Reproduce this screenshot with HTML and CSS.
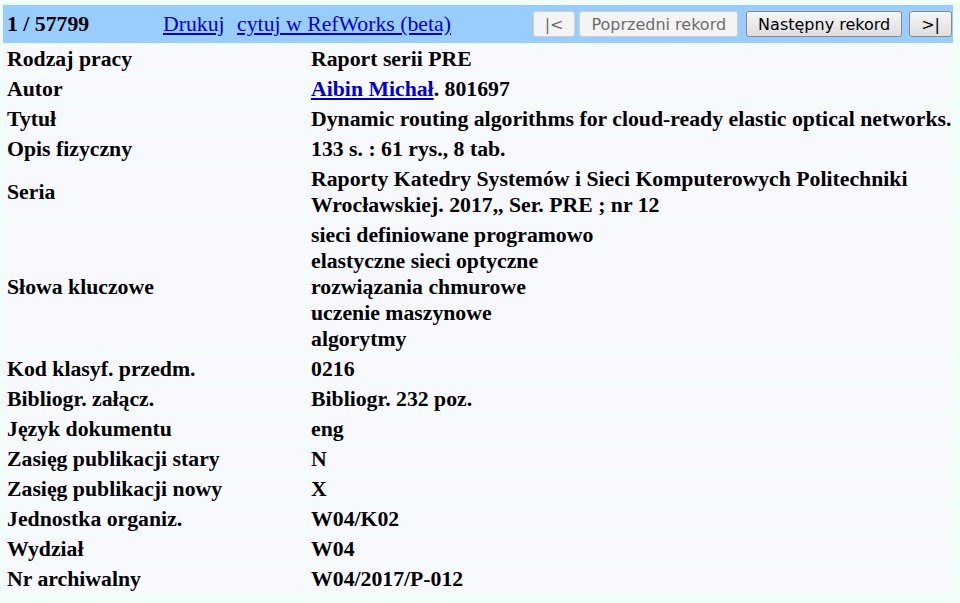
FILE: index.html
```html
<!DOCTYPE html>
<html>
  <head>
    <meta http-equiv="content-type" content="text/html; charset=UTF-8">
    <link rel="stylesheet" href="styles.css">
  </head>
  <body>
    <table class="rekord">
      <colgroup>
        <col class="kolumna-etykiet">
        <col>
      </colgroup>
      <tr>
        <td colspan="2" class="naglowek">
          <div class="pasek">
            <span class="licznik">1 / 57799</span>
            <span class="linki">
              <a href="#">Drukuj</a>
              <a href="#">cytuj w RefWorks (beta)</a>
            </span>
            <span class="przyciski">
              <button class="przycisk" disabled>|&lt;</button>
              <button class="przycisk poprzedni" disabled>Poprzedni rekord</button>
              <button class="przycisk nastepny">Następny rekord</button>
              <button class="przycisk ostatni">&gt;|</button>
            </span>
          </div>
        </td>
      </tr>
      <tr><td class="etykieta">Rodzaj pracy</td><td class="wartosc">Raport serii PRE</td></tr>
      <tr><td class="etykieta">Autor</td><td class="wartosc"><a href="#">Aibin Michał</a>. 801697</td></tr>
      <tr><td class="etykieta">Tytuł</td><td class="wartosc jednalinia">Dynamic routing algorithms for cloud-ready elastic optical networks.</td></tr>
      <tr><td class="etykieta">Opis fizyczny</td><td class="wartosc">133 s. : 61 rys., 8 tab.</td></tr>
      <tr><td class="etykieta">Seria</td><td class="wartosc">Raporty Katedry Systemów i Sieci Komputerowych Politechniki<br>Wrocławskiej. 2017,, Ser. PRE ; nr 12</td></tr>
      <tr>
        <td class="etykieta">Słowa kluczowe</td>
        <td class="wartosc">sieci definiowane programowo<br>elastyczne sieci optyczne<br>rozwiązania chmurowe<br>uczenie maszynowe<br>algorytmy</td>
      </tr>
      <tr><td class="etykieta">Kod klasyf. przedm.</td><td class="wartosc">0216</td></tr>
      <tr><td class="etykieta">Bibliogr. załącz.</td><td class="wartosc">Bibliogr. 232 poz.</td></tr>
      <tr><td class="etykieta">Język dokumentu</td><td class="wartosc">eng</td></tr>
      <tr><td class="etykieta">Zasięg publikacji stary</td><td class="wartosc">N</td></tr>
      <tr><td class="etykieta">Zasięg publikacji nowy</td><td class="wartosc">X</td></tr>
      <tr><td class="etykieta">Jednostka organiz.</td><td class="wartosc">W04/K02</td></tr>
      <tr><td class="etykieta">Wydział</td><td class="wartosc">W04</td></tr>
      <tr><td class="etykieta">Nr archiwalny</td><td class="wartosc">W04/2017/P-012</td></tr>
    </table>
  </body>
</html>
```

FILE: styles.css
```css
html{background-color: #f0fff8;}
body{margin: 3px 1px; font-family: "Liberation Serif", "Times New Roman", serif;}
.rekord{
  width: 954px;
  border-spacing: 2px;
  font-size: 21.75px;
  line-height: 26px;
  font-weight: bold;
  color: black;
}
.kolumna-etykiet{
  width: 302px;
}
.rekord td{
  padding: 1px 4px;
  background-color: #f8f8ff;
}
.rekord td.naglowek{
  background-color: #99ccff;
  padding: 0 1px 0 4px;
  height: 38px;
}
.pasek{
  display: flex;
  align-items: center;
}
.licznik{
  width: 156px;
}
.linki a{
  font-weight: normal;
  color: #0000cc;
  margin-right: 7px;
}
.przyciski{
  margin-left: auto;
  display: flex;
}
.przycisk{
  font-family: "DejaVu Sans", Tahoma, sans-serif;
  font-size: 16px;
  height: 26px;
  padding: 0 11px;
  border: 1px solid #8a8a8a;
  border-radius: 3px;
  background: linear-gradient(#f6f6f6, #dedede);
  color: black;
}
.przycisk:disabled{
  border-color: #cfcfcf;
  background: #f4f4f4;
  color: #6d6d6d;
}
.poprzedni{margin-left: 4px;}
.nastepny{margin-left: 8px;}
.ostatni{margin-left: 7px;}
.etykieta{
  vertical-align: middle;
}
.rekord td.wartosc{
  padding-right: 0;
}
.jednalinia{
  white-space: nowrap;
}
.wartosc a{
  color: #0000cc;
}
```
